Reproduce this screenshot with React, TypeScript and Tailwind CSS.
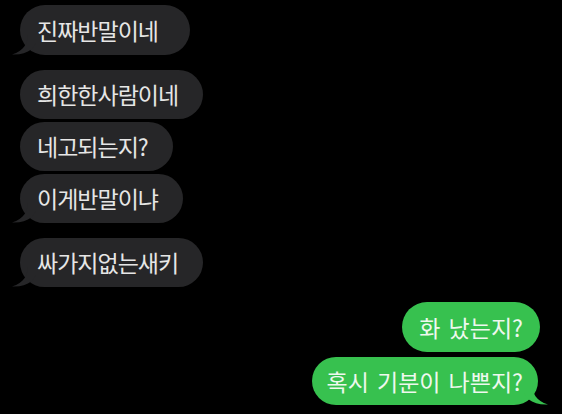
import React from "react";

const font = { fontFamily: '"Noto Sans CJK KR", "Noto Sans", sans-serif' };

function GreyTail() {
  return (
    <svg className="absolute left-[-8px] bottom-0" width="24" height="22" viewBox="0 0 24 22">
      <path d="M16 0 C16 10 12 18 0 21.5 C8 22 14 20 20 16 L24 10 L24 0 Z" fill="#262628" />
    </svg>
  );
}

function GreenTail() {
  return (
    <svg className="absolute right-[-10px] bottom-0" width="24" height="22" viewBox="0 0 24 22">
      <path d="M8 0 C8 10 12 18 24 21.5 C16 22 10 20 4 16 L0 10 L0 0 Z" fill="#37c14f" />
    </svg>
  );
}

function Grey({ text, tail, w }: { text: string; tail?: boolean; w: string }) {
  return (
    <div className={`relative flex h-[49px] items-center rounded-full bg-[#262628] pl-[17px] text-[23px] tracking-[-1px] text-[#e6e6e6] ${w}`}>
      {tail && <GreyTail />}
      <span className="relative">{text}</span>
    </div>
  );
}

export default function App() {
  return (
    <div className="h-[414px] w-[562px] overflow-hidden bg-black" style={font}>
      <div className="flex flex-col items-start pl-[20px] pt-[5px]">
        <div className="relative flex h-[50px] w-[170px] items-center rounded-full bg-[#262628] pl-[17px] text-[23px] tracking-[-1px] text-[#e6e6e6]">
          <GreyTail />
          <span className="relative">진짜반말이네</span>
        </div>
        <div className="mt-[15px] flex flex-col gap-[3px]">
          <Grey text="희한한사람이네" w="w-[183px]" />
          <Grey text="네고되는지?" w="w-[153px]" />
          <Grey text="이게반말이냐" tail w="w-[163px]" />
        </div>
        <div className="mt-[15px]">
          <Grey text="싸가지없는새키" tail w="w-[183px]" />
        </div>
      </div>
      <div className="mt-[15px] flex flex-col items-end gap-[5px] pr-[22px]">
        <div className="flex h-[50px] w-[138px] items-center justify-end rounded-full bg-[#37c14f] pr-[17px] text-[23px] [word-spacing:3px] text-[#eef8ee]">
          화 났는지?
        </div>
        <div className="relative mr-[2px] flex h-[48px] w-[226px] items-center justify-end rounded-full bg-[#37c14f] pr-[15px] text-[23px] [word-spacing:3px] text-[#eef8ee]">
          <GreenTail />
          <span className="relative">혹시 기분이 나쁜지?</span>
        </div>
      </div>
    </div>
  );
}
